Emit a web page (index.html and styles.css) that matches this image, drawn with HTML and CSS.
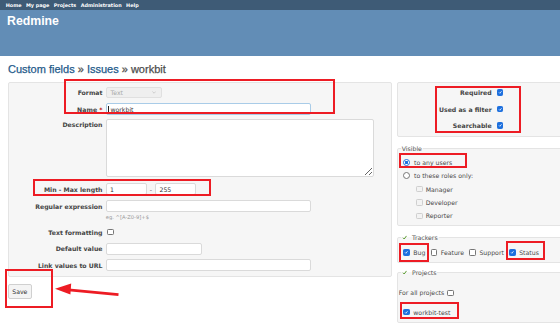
FILE: index.html
```html
<!DOCTYPE html>
<html>
<head>
<meta charset="utf-8">
<title>Redmine</title>
<link rel="stylesheet" href="styles.css">
</head>
<body>
<div class="top-menu"><span>Home</span><span>My page</span><span>Projects</span><span>Administration</span><span>Help</span></div>
<div class="header"><h1>Redmine</h1></div>
<div class="content">
  <h2><a class="crumb">Custom fields</a> » <a class="crumb">Issues</a> » workbit</h2>
  <div class="columns">
    <div class="left">
      <div class="box form">
        <div class="row r-format">
          <span class="lbl">Format</span>
          <span class="select"><span>Text</span><svg class="chev" viewBox="0 0 6 4"><path d="M0.6 0.6 L3 3 L5.4 0.6" fill="none" stroke="#b5b5b5" stroke-width="0.8"/></svg></span>
        </div>
        <div class="row r-name">
          <span class="lbl">Name <span class="req">*</span></span>
          <span class="field focus w-long"><span class="caret"></span>workbit</span>
        </div>
        <div class="row r-desc">
          <span class="lbl">Description</span>
          <textarea class="area"></textarea>
        </div>
        <div class="row r-minmax">
          <span class="lbl">Min - Max length</span>
          <span class="field w-num">1</span><span class="dash">-</span><span class="field w-num">255</span>
        </div>
        <div class="row r-regex">
          <span class="lbl">Regular expression</span>
          <span class="field w-long"></span>
        </div>
        <div class="hint">eg. ^[A-Z0-9]+$</div>
        <div class="row r-tf">
          <span class="lbl">Text formatting</span>
          <span class="cb tf-cb"></span>
        </div>
        <div class="row r-default">
          <span class="lbl">Default value</span>
          <span class="field w-mid"></span>
        </div>
        <div class="row r-link">
          <span class="lbl">Link values to URL</span>
          <span class="field w-long"></span>
        </div>
      </div>
      <button class="save" type="button">Save</button>
    </div>
    <div class="right">
      <div class="box flags">
        <div class="flag"><span class="lbl">Required</span><span class="cb on"><svg viewBox="0 0 10 10"><path d="M2.2 5.3 L4.2 7.3 L7.9 2.8" fill="none" stroke="#fff" stroke-width="1.7"/></svg></span></div>
        <div class="flag"><span class="lbl">Used as a filter</span><span class="cb on"><svg viewBox="0 0 10 10"><path d="M2.2 5.3 L4.2 7.3 L7.9 2.8" fill="none" stroke="#fff" stroke-width="1.7"/></svg></span></div>
        <div class="flag"><span class="lbl">Searchable</span><span class="cb on"><svg viewBox="0 0 10 10"><path d="M2.2 5.3 L4.2 7.3 L7.9 2.8" fill="none" stroke="#fff" stroke-width="1.7"/></svg></span></div>
      </div>
      <fieldset class="fs fs-visible">
        <legend>Visible</legend>
        <div class="opt"><span class="radio on"></span><span>to any users</span></div>
        <div class="opt"><span class="radio"></span><span>to these roles only:</span></div>
        <div class="opt role"><span class="cb dis"></span><span>Manager</span></div>
        <div class="opt role"><span class="cb dis"></span><span>Developer</span></div>
        <div class="opt role"><span class="cb dis"></span><span>Reporter</span></div>
      </fieldset>
      <fieldset class="fs fs-trackers">
        <legend><svg class="tick" viewBox="0 0 10 10"><path d="M1.5 5.5 L4 8 L8.6 1.8" fill="none" stroke="#5d9c33" stroke-width="2"/></svg>Trackers</legend>
        <div class="items">
          <span class="tr"><span class="cb on"><svg viewBox="0 0 10 10"><path d="M2.2 5.3 L4.2 7.3 L7.9 2.8" fill="none" stroke="#fff" stroke-width="1.7"/></svg></span>Bug</span>
          <span class="tr"><span class="cb"></span>Feature</span>
          <span class="tr"><span class="cb"></span>Support</span>
          <span class="tr"><span class="cb on"><svg viewBox="0 0 10 10"><path d="M2.2 5.3 L4.2 7.3 L7.9 2.8" fill="none" stroke="#fff" stroke-width="1.7"/></svg></span>Status</span>
        </div>
      </fieldset>
      <fieldset class="fs fs-projects">
        <legend><svg class="tick" viewBox="0 0 10 10"><path d="M1.5 5.5 L4 8 L8.6 1.8" fill="none" stroke="#5d9c33" stroke-width="2"/></svg>Projects</legend>
        <div class="prow all">For all projects <span class="cb"></span></div>
        <div class="prow proj"><span class="cb on"><svg viewBox="0 0 10 10"><path d="M2.2 5.3 L4.2 7.3 L7.9 2.8" fill="none" stroke="#fff" stroke-width="1.7"/></svg></span>workbit-test</div>
      </fieldset>
    </div>
  </div>
</div>

<div class="mark m1"></div>
<div class="mark m2"></div>
<div class="mark m3"></div>
<div class="mark m4"></div>
<div class="mark m5"></div>
<div class="mark m6"></div>
<div class="mark m7"></div>
<div class="mark m8"></div>
<svg class="arrow" viewBox="0 0 560 328">
  <line x1="118.5" y1="294.6" x2="66" y2="289.6" stroke="#ed1c24" stroke-width="2.6"/>
  <polygon points="55,288.8 71.2,283.6 70.4,294.4" fill="#ed1c24"/>
</svg>
</body>
</html>
```
FILE: styles.css
```css
* { box-sizing: border-box; }
html, body { margin: 0; padding: 0; }
body {
  width: 560px;
  height: 328px;
  overflow: hidden;
  position: relative;
  background: #fff;
  font-family: "DejaVu Sans", Verdana, sans-serif;
  font-size: 6.2px;
  color: #4a4a4a;
}

.top-menu {
  height: 10px;
  background: #3e5b76;
  display: flex;
  align-items: center;
  padding-left: 5.7px;
  gap: 4.4px;
  color: #fff;
  font-weight: bold;
  font-size: 4.9px;
  line-height: 10px;
}

.header {
  height: 46px;
  background: #628db6;
  padding: 5px 0 0 7px;
}
.header h1 {
  margin: 0;
  font-family: "Liberation Sans", Arial, sans-serif;
  font-weight: bold;
  font-size: 12.3px;
  line-height: 12.3px;
  color: #fff;
}

.content { padding: 7.6px 0 0 8px; }
.content h2 {
  margin: 0 0 7.4px;
  font-family: "Liberation Sans", Arial, sans-serif;
  font-weight: normal;
  font-size: 11px;
  line-height: 11px;
  color: #4d4d4d;
  -webkit-text-stroke: 0.25px currentColor;
}
.crumb { color: #245a8a; text-decoration: none; }

.columns { display: flex; gap: 5px; align-items: flex-start; }
.left { width: 384px; flex: none; }
.right { width: 175px; flex: none; }

.box {
  background: #f6f6f6;
  border: 1px solid #e4e4e4;
  border-radius: 2px;
  line-height: 7px;
}

/* left form */
.form { padding: 3.5px 0 5px; }
.row { display: flex; align-items: center; }
.lbl { font-weight: bold; color: #444; white-space: nowrap; }
.row > .lbl { width: 93.5px; margin-right: 3px; text-align: right; flex: none; }
.req { color: #bb0000; }

.r-format { height: 12px; }
.r-name { height: 11.5px; margin-top: 5px; }
.r-desc { height: 57.5px; margin-top: 4.5px; align-items: flex-start; }
.r-desc > .lbl { padding-top: 2px; }
.r-minmax { height: 11.5px; margin-top: 6.5px; }
.r-regex { height: 12px; margin-top: 5.5px; }
.r-tf { height: 7.5px; margin-top: 7.5px; }
.r-default { height: 12px; margin-top: 7px; }
.r-link { height: 12px; margin-top: 4.5px; }

.select {
  width: 56.5px;
  height: 11.6px;
  background: #efefef;
  border: 1px solid #e0e0e0;
  border-radius: 2px;
  color: #aaa;
  display: flex;
  align-items: center;
  justify-content: space-between;
  padding: 0 4.6px 0 4px;
}
.chev { width: 4.2px; height: 3px; }

.field {
  height: 100%;
  background: #fff;
  border: 1px solid #dadada;
  border-radius: 2px;
  display: flex;
  align-items: center;
  padding-left: 3.5px;
  color: #333;
}
.field.focus { border-color: #a9cce8; padding-left: 1px; }
.caret { width: 0.8px; height: 7px; background: #222; margin-right: 2.2px; }
.w-long { width: 205.5px; }
.w-mid { width: 96px; }
.w-num { width: 41px; }
.dash { width: 8.5px; text-align: center; color: #505050; }

.area {
  width: 268px;
  height: 57.5px;
  margin: 0;
  background: #fff;
  border: 1px solid #dadada;
  border-radius: 2px;
  font: inherit;
}

.hint {
  height: 7px;
  margin-top: 1.5px;
  padding-left: 96.8px;
  font-size: 5.2px;
  line-height: 7px;
  color: #999;
}

.tf-cb { margin-left: 1.8px; }

.save {
  display: block;
  margin: 7px 0 0;
  width: 23.7px;
  height: 14.5px;
  padding: 0;
  background: #f4f4f4;
  border: 1px solid #d0d0d0;
  border-radius: 2px;
  font: inherit;
  font-size: 6.2px;
  color: #333;
}

/* checkboxes / radios */
.cb {
  width: 6.5px;
  height: 6.5px;
  flex: none;
  display: inline-block;
  background: #fff;
  border: 0.8px solid #767676;
  border-radius: 1.3px;
  vertical-align: middle;
}
.cb.on { background: #1c6fde; border-color: #1c6fde; }
.cb.on svg { display: block; width: 100%; height: 100%; }
.cb.dis { background: #f3f3f3; border-color: #cfcfcf; }

.radio {
  width: 7px;
  height: 7px;
  flex: none;
  border-radius: 50%;
  border: 0.8px solid #767676;
  background: #fff;
}
.radio.on {
  border: 1.6px solid #1c6fde;
  background: radial-gradient(circle, #1c6fde 0 1.4px, #fff 1.6px);
}

/* right column */
.flags {
  padding: 6.2px 0 6.8px;
  display: flex;
  flex-direction: column;
  gap: 9.5px;
}
.flag { display: flex; align-items: center; height: 7px; }
.flag .lbl { width: 93.7px; text-align: right; margin-right: 5.3px; }

.fs {
  margin: 0;
  padding: 0 0 0 5px;
  border: 1px solid #e4e4e4;
  border-radius: 2px;
  background: #f6f6f6;
  min-width: 0;
  line-height: 7px;
}
.fs legend {
  padding: 0 1px;
  margin-left: -2.3px;
  line-height: 7px;
  color: #555;
  display: flex;
  align-items: center;
}
.tick { width: 5.4px; height: 5px; margin: 0 4.6px 0 0.4px; }

.fs-visible { margin-top: 7.8px; padding-top: 3.8px; padding-bottom: 2.3px; }
.opt { display: flex; align-items: center; height: 13.4px; gap: 4px; }
.opt.role { padding-left: 13px; gap: 3.2px; }

.fs-trackers { margin-top: 8.2px; padding-top: 8px; padding-bottom: 5.5px; }
.items { display: flex; align-items: center; height: 7px; padding-left: 0.3px; }
.tr { display: inline-flex; align-items: center; gap: 3.5px; margin-right: 5.3px; white-space: nowrap; }

.fs-projects { margin-top: 6.8px; padding-top: 13px; padding-bottom: 6.8px; }
.prow { display: flex; align-items: center; height: 7px; white-space: nowrap; }
.prow.all { margin-left: -4.3px; gap: 3px; }
.prow.proj { margin-top: 12.4px; gap: 3.8px; }

/* annotations (overlay) */
.mark { position: absolute; border: 2px solid #ed1c24; }
.m1 { left: 64px; top: 79px; width: 271px; height: 34.5px; }
.m2 { left: 33px; top: 179px; width: 178px; height: 17px; }
.m3 { left: 435px; top: 86px; width: 86px; height: 47px; }
.m4 { left: 399px; top: 153px; width: 68px; height: 15px; }
.m5 { left: 399px; top: 243px; width: 30px; height: 19px; }
.m6 { left: 506px; top: 241px; width: 39px; height: 19px; }
.m7 { left: 400px; top: 302px; width: 59px; height: 17px; }
.m8 { left: 5px; top: 268.5px; width: 48px; height: 39.5px; }
.arrow { position: absolute; left: 0; top: 0; width: 560px; height: 328px; pointer-events: none; }
```
